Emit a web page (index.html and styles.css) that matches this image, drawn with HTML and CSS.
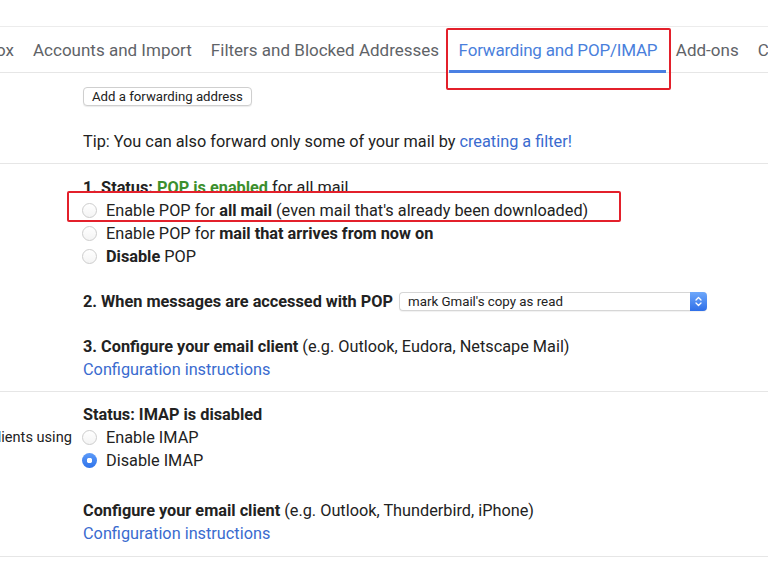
FILE: index.html
```html
<!DOCTYPE html>
<html>
<head>
<meta charset="utf-8">
<link rel="stylesheet" href="styles.css">
</head>
<body>
<nav class="tabs">
  <div class="tab first">Inbox</div>
  <div class="tab">Accounts and Import</div>
  <div class="tab">Filters and Blocked Addresses</div>
  <div class="tab active">Forwarding and POP/IMAP</div>
  <div class="tab">Add-ons</div>
  <div class="tab">Chat and Meet</div>
</nav>
<main class="settings">
  <section class="row fwd">
    <div class="label"><b>Forwarding:</b><br>Learn more</div>
    <div class="content">
      <div class="btn">Add a forwarding address</div>
      <p class="tip">Tip: You can also forward only some of your mail by <a class="link">creating a filter!</a></p>
    </div>
  </section>
  <section class="row pop">
    <div class="label"><b>POP download:</b><br>Learn more</div>
    <div class="content">
      <div class="line"><b>1. Status: <span class="green">POP is enabled</span></b> for all mail</div>
      <div class="opt"><span class="radio"></span><span>Enable POP for <b>all mail</b> (even mail that's already been downloaded)</span></div>
      <div class="opt"><span class="radio"></span><span>Enable POP for <b>mail that arrives from now on</b></span></div>
      <div class="opt"><span class="radio"></span><span><b>Disable</b> POP</span></div>
      <div class="line gap"><b>2. When messages are accessed with POP</b><div class="select"><span class="sel-text">mark Gmail's copy as read</span><span class="stepper"><svg width="17" height="19" viewBox="0 0 17 19"><defs><linearGradient id="g" x1="0" y1="0" x2="0" y2="1"><stop offset="0" stop-color="#6ea8fb"/><stop offset="1" stop-color="#2f6fe8"/></linearGradient></defs><path d="M0 0H13A4 4 0 0 1 17 4V15A4 4 0 0 1 13 19H0Z" fill="url(#g)"/><path d="M6 8L8.5 5.5L11 8M6 11L8.5 13.5L11 11" fill="none" stroke="#fff" stroke-width="1.3" stroke-linecap="round" stroke-linejoin="round"/></svg></span></div></div>
      <div class="line gap"><b>3. Configure your email client</b> (e.g. Outlook, Eudora, Netscape Mail)</div>
      <div class="line"><a class="link">Configuration instructions</a></div>
    </div>
  </section>
  <section class="row imap">
    <div class="label"><b>IMAP access:</b><br>(access Gmail from other clients using<br>IMAP)<br>Learn more</div>
    <div class="content">
      <div class="line"><b>Status: IMAP is disabled</b></div>
      <div class="opt"><span class="radio"></span><span>Enable IMAP</span></div>
      <div class="opt"><span class="radio checked"></span><span>Disable IMAP</span></div>
      <div class="line gap2"><b>Configure your email client</b> (e.g. Outlook, Thunderbird, iPhone)</div>
      <div class="line"><a class="link">Configuration instructions</a></div>
    </div>
  </section>
</main>
<div class="mark mark-tab"></div>
<div class="mark mark-opt"></div>
</body>
</html>
```
FILE: styles.css
```css
* { box-sizing: border-box; }
html, body { margin: 0; background: #fff; }
body {
  font-family: Roboto, "Liberation Sans", sans-serif;
  color: #222;
  font-size: 16.3px;
  width: 768px;
  height: 562px;
  overflow: hidden;
  position: relative;
}
b { font-weight: 700; color: #222; }

.tabs {
  display: flex;
  margin-top: 26px;
  height: 47px;
  border-top: 1px solid #ececec;
  border-bottom: 1px solid #e6e6e6;
  white-space: nowrap;
}
.tab {
  display: flex;
  align-items: center;
  padding: 3px 9.5px 0;
  margin-bottom: -1px;
  border-bottom: 3px solid transparent;
  font-size: 17px;
  color: #5f6368;
}
.tab.first { margin-left: -37px; }
.tab.active {
  color: #4a7fdc;
  border-bottom-color: #4a80e3;
  letter-spacing: -0.2px;
  padding: 3px 9px 0 10px;
}

.settings {
  margin-left: -206px;
  width: 974px;
}
.row {
  display: grid;
  grid-template-columns: 278px 1fr;
  column-gap: 11px;
  border-bottom: 1px solid #e6e6e6;
  line-height: 23px;
}
.label {
  white-space: nowrap;
  color: #222;
  font-size: 14.6px;
  line-height: 23px;
  padding-left: 28px;
}
.content { white-space: nowrap; }

.fwd { padding: 14px 0 10px; }
.pop { padding: 12px 0 10px; }
.imap { padding: 11px 0 11px; }

.btn {
  display: block;
  width: max-content;
  height: 19px;
  line-height: 17px;
  padding: 0 8px;
  font-size: 13.2px;
  color: #222;
  border: 1px solid #cfcfcf;
  border-radius: 4px;
  box-shadow: 0 1px 1px rgba(0,0,0,0.08);
  background: #fff;
}
.tip { margin: 24px 0 0; }
.link { color: #3a6bcf; text-decoration: none; }
.green { color: #3c8f2e; }

.line.gap { margin-top: 22px; }
.line.gap2 { margin-top: 27px; }

.opt { display: flex; align-items: center; gap: 9px; margin-left: -1px; }
.radio {
  width: 15px;
  height: 15px;
  border-radius: 50%;
  border: 1px solid #cdcdcd;
  background: linear-gradient(#fff, #f4f4f4);
  flex: none;
}
.radio.checked {
  border: none;
  background: radial-gradient(circle, #fff 0 2.6px, transparent 3px), linear-gradient(#5d9bf9, #2f73ea);
}

.select {
  display: inline-flex;
  align-items: stretch;
  vertical-align: middle;
  margin-left: 6px;
  margin-top: -2px;
  width: 308px;
  height: 19px;
  border: 1px solid #d6d6d6;
  border-right: none;
  border-radius: 4px;
  box-shadow: 0 1px 1px rgba(0,0,0,0.06);
  background: #fff;
}
.sel-text {
  flex: 1;
  font-size: 13.3px;
  line-height: 17px;
  padding-left: 8px;
  color: #222;
}
.stepper { display: block; width: 17px; height: 19px; margin-top: -1px; }
.stepper svg { display: block; }

.mark {
  position: absolute;
  border: 2px solid #e3202b;
  pointer-events: none;
}
.mark-tab { left: 446px; top: 28px; width: 225px; height: 62px; border-radius: 2px; }
.mark-opt { left: 67px; top: 191px; width: 554px; height: 31px; border-radius: 2px; }
```
